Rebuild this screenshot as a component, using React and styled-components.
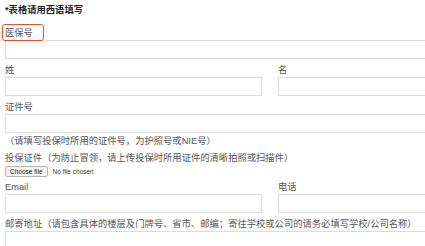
import React from "react";
import styled, { createGlobalStyle } from "styled-components";

const GlobalStyle = createGlobalStyle`
  html, body {
    margin: 0;
    padding: 0;
    background: #ffffff;
    overflow: hidden;
  }
  body {
    font-family: "Liberation Sans", "Noto Sans CJK SC", sans-serif;
  }
`;

const Form = styled.form`
  width: 530px;
  padding: 4px 0 0 5px;
`;

const Title = styled.div`
  font-size: 9.3px;
  line-height: 13px;
  font-weight: bold;
  color: #222;
  margin-bottom: 10px;
`;

const Field = styled.div`
  margin-top: ${(p) => (p.$first ? 0 : 5)}px;
`;

const Row = styled.div`
  display: grid;
  grid-template-columns: 257px 257px;
  column-gap: 16px;
  margin-top: 5px;
`;

const Label = styled.label`
  display: block;
  position: relative;
  font-size: 9.3px;
  line-height: 12px;
  color: #555;
  white-space: nowrap;
  margin-bottom: 1px;
`;

const Marked = styled.span`
  position: relative;
  &::before {
    content: "";
    position: absolute;
    left: -3px;
    top: -4px;
    width: 40px;
    height: 15px;
    border: 1.5px solid #e2532d;
    border-radius: 3px;
  }
`;

const Input = styled.input`
  display: block;
  box-sizing: border-box;
  width: 100%;
  height: 19px;
  margin: 0;
  border: 1px solid #dcdcdc;
  background: #fff;
  outline: none;
`;

const Hint = styled.div`
  font-size: 9.3px;
  line-height: 12px;
  color: #555;
  margin-top: 2px;
  white-space: nowrap;
`;

const FileRow = styled.div`
  display: flex;
  align-items: center;
  gap: 5px;
  height: 10px;
  margin-top: 2px;
  font-size: 6.5px;
  color: #333;
`;

const FileButton = styled.span`
  display: inline-flex;
  align-items: center;
  height: 9px;
  padding: 0 4px;
  border: 0.5px solid #b5b5b5;
  border-radius: 2px;
  background: #f2f2f2;
  color: #222;
  font-size: 6.5px;
`;

export default function App() {
  return (
    <>
      <GlobalStyle />
      <Form>
        <Title>*表格请用西语填写</Title>
        <Field $first>
          <Label>
            <Marked>医保号</Marked>
          </Label>
          <Input />
        </Field>
        <Row>
          <div>
            <Label>姓</Label>
            <Input />
          </div>
          <div>
            <Label>名</Label>
            <Input />
          </div>
        </Row>
        <Field>
          <Label>证件号</Label>
          <Input />
        </Field>
        <Hint>（请填写投保时所用的证件号，为护照号或NIE号）</Hint>
        <Field>
          <Label>投保证件（为防止冒领，请上传投保时所用证件的清晰拍照或扫描件）</Label>
          <FileRow>
            <FileButton>Choose file</FileButton>
            <span>No file chosen</span>
          </FileRow>
        </Field>
        <Row>
          <div>
            <Label>Email</Label>
            <Input />
          </div>
          <div>
            <Label>电话</Label>
            <Input />
          </div>
        </Row>
        <Field>
          <Label>
            邮寄地址（请包含具体的楼层及门牌号、省市、邮编；寄往学校或公司的请务必填写学校/公司名称）
          </Label>
          <Input />
        </Field>
      </Form>
    </>
  );
}
